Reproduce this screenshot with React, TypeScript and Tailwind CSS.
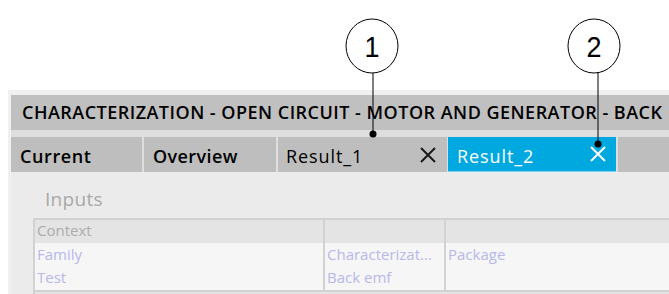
import React from "react";

function XIcon({ color }: { color: string }) {
  return (
    <svg width="18" height="18" viewBox="0 0 18 18" className="shrink-0">
      <path d="M2 2 L16 16 M16 2 L2 16" stroke={color} strokeWidth="2" fill="none" />
    </svg>
  );
}

export default function App() {
  return (
    <div
      className="relative w-[669px] h-[294px] overflow-hidden bg-white"
      style={{ fontFamily: '"Open Sans", "Liberation Sans", sans-serif' }}
    >
      <div className="h-[90px]" />
      <div className="ml-[8px] bg-[#f0f0f0] pl-[3px] pt-[5px] flex flex-col h-[204px]">
        <div className="h-[35px] bg-[#c0c0c0] pl-[11px] flex items-center text-[18px] tracking-[0.48px] font-semibold text-black whitespace-nowrap">
          CHARACTERIZATION - OPEN CIRCUIT - MOTOR AND GENERATOR - BACK
        </div>
        <div className="h-[7px] bg-[#dedede]" />
        <div className="h-[35px] flex gap-[2px] bg-[#dedede] text-[18px] leading-[24px]">
          <div className="w-[131px] bg-[#bebebe] pl-[9px] pt-[3px] flex items-center font-semibold tracking-[0.6px] text-black">Current</div>
          <div className="w-[132px] bg-[#bebebe] pl-[9px] pt-[3px] flex items-center font-semibold tracking-[0.4px] text-black">Overview</div>
          <div className="w-[169px] bg-[#bebebe] pl-[8px] pr-[10px] flex items-center justify-between text-black">
            <span className="pt-[3px] tracking-[0.9px]">Result_1</span>
            <XIcon color="#1a1a1a" />
          </div>
          <div className="w-[168px] -ml-[1px] bg-[#00a8e0] border-b border-[#7fd3f0] pl-[9px] pr-[9px] flex items-center justify-between text-white">
            <span className="pt-[3px] tracking-[0.9px]">Result_2</span>
            <XIcon color="#ffffff" />
          </div>
          <div className="flex-1 bg-[#bebebe]" />
        </div>
        <div className="flex-1 bg-[#ebebeb] flex flex-col pl-[22px]">
          <div className="h-[46px] pl-[12px] pt-[15px] text-[19px] tracking-[0.3px] text-[#a9a9a9] leading-[24px]">Inputs</div>
          <div className="flex-1 border-l-2 border-t-2 border-[#d2d2d2] flex flex-col text-[15px] leading-[20px]">
            <div className="h-[23px] bg-[#e4e4e4] flex">
              <div className="w-[290px] pl-[2px] flex items-center pb-[3px] text-[#acacac] border-r-2 border-[#d2d2d2]">Context</div>
              <div className="w-[121px] border-r-2 border-[#d2d2d2]" />
              <div className="flex-1" />
            </div>
            <div className="bg-[#f6f6f6] flex">
              <div className="w-[290px] border-r-2 border-[#d2d2d2] flex flex-col text-[#b8b8ec]">
                <div className="h-[24px] pl-[2px] pb-[3px] flex items-center">Family</div>
                <div className="h-[23px] pl-[2px] pb-[3px] flex items-center">Test</div>
              </div>
              <div className="w-[121px] border-r-2 border-[#d2d2d2] flex flex-col text-[#b8b8ec]">
                <div className="h-[24px] pl-[2px] pb-[3px] flex items-center whitespace-nowrap overflow-hidden">Characterizat...</div>
                <div className="h-[23px] pl-[2px] pb-[3px] flex items-center">Back emf</div>
              </div>
              <div className="flex-1 flex flex-col text-[#b8b8ec]">
                <div className="h-[24px] pl-[2px] pb-[3px] flex items-center">Package</div>
              </div>
            </div>
            <div className="border-t-2 border-[#d2d2d2] flex-1 bg-[#e4e4e4]" />
          </div>
        </div>
      </div>

      {/* annotations */}
      <svg className="absolute left-0 top-0" width="669" height="294" viewBox="0 0 669 294">
        <ellipse cx="372" cy="46" rx="26" ry="27" fill="white" stroke="black" strokeWidth="1" />
        <text x="372" y="57" textAnchor="middle" fontSize="30" fontFamily="Liberation Sans, Arial, sans-serif" fill="black" transform="translate(372 0) scale(0.9 1) translate(-372 0)">1</text>
        <line x1="373" y1="73" x2="373" y2="134" stroke="black" strokeWidth="1" />
        <circle cx="373" cy="134" r="3.5" fill="black" />
        <ellipse cx="594" cy="46" rx="26" ry="27" fill="white" stroke="black" strokeWidth="1" />
        <text x="594" y="57" textAnchor="middle" fontSize="30" fontFamily="Liberation Sans, Arial, sans-serif" fill="black" transform="translate(594 0) scale(0.9 1) translate(-594 0)">2</text>
        <line x1="598" y1="72" x2="598" y2="144" stroke="black" strokeWidth="1" />
        <circle cx="598" cy="144" r="3.5" fill="black" />
      </svg>
    </div>
  );
}
